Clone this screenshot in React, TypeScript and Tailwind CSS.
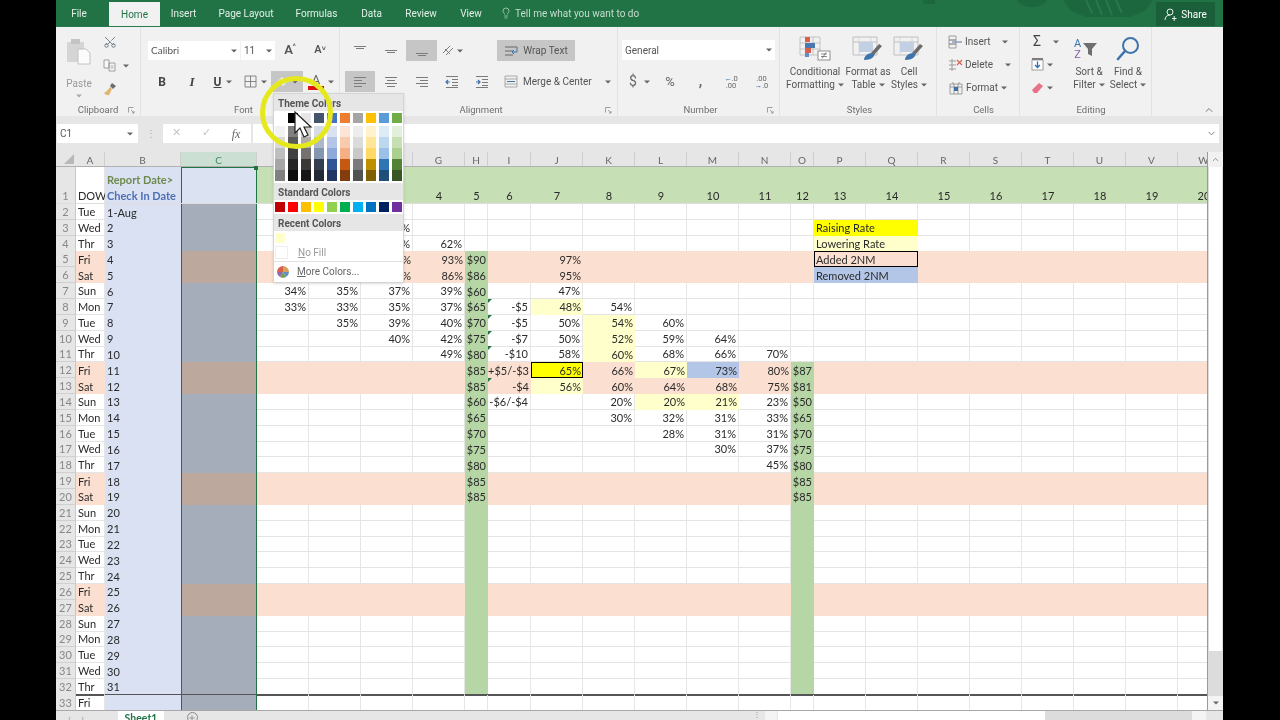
import { ChevronDown, ChevronUp, Lightbulb, Scissors, Plus } from "lucide-react";
import type { ReactNode } from "react";

const COLS = ["A", "B", "C", "D", "E", "F", "G", "H", "I", "J", "K", "L", "M", "N", "O", "P", "Q", "R", "S", "T", "U", "V", "W"];
const GRID =
  "grid grid-cols-[20px_29px_76px_76px_52px_52px_52px_52px_23px_43px_52px_52px_52px_52px_52px_23px_52px_52px_52px_52px_52px_52px_52px_52px]";

const DOW = ["Tue", "Wed", "Thr", "Fri", "Sat", "Sun", "Mon"];
const ORANGE = [5, 6, 12, 13, 19, 20, 26, 27];

const VALUES: Record<number, Record<string, string>> = {
  3: { F: "58%", P: "Raising Rate" },
  4: { F: "59%", G: "62%", P: "Lowering Rate" },
  5: { F: "90%", G: "93%", H: "$90", J: "97%", P: "Added 2NM" },
  6: { F: "83%", G: "86%", H: "$86", J: "95%", P: "Removed 2NM" },
  7: { D: "34%", E: "35%", F: "37%", G: "39%", H: "$60", J: "47%" },
  8: { D: "33%", E: "33%", F: "35%", G: "37%", H: "$65", I: "-$5", J: "48%", K: "54%" },
  9: { E: "35%", F: "39%", G: "40%", H: "$70", I: "-$5", J: "50%", K: "54%", L: "60%" },
  10: { F: "40%", G: "42%", H: "$75", I: "-$7", J: "50%", K: "52%", L: "59%", M: "64%" },
  11: { G: "49%", H: "$80", I: "-$10", J: "58%", K: "60%", L: "68%", M: "66%", N: "70%" },
  12: { H: "$85", I: "+$5/-$3", J: "65%", K: "66%", L: "67%", M: "73%", N: "80%", O: "$87" },
  13: { H: "$85", I: "-$4", J: "56%", K: "60%", L: "64%", M: "68%", N: "75%", O: "$81" },
  14: { H: "$60", I: "-$6/-$4", K: "20%", L: "20%", M: "21%", N: "23%", O: "$50" },
  15: { H: "$65", K: "30%", L: "32%", M: "31%", N: "33%", O: "$65" },
  16: { H: "$70", L: "28%", M: "31%", N: "31%", O: "$70" },
  17: { H: "$75", M: "30%", N: "37%", O: "$75" },
  18: { H: "$80", N: "45%", O: "$80" },
  19: { H: "$85", O: "$85" },
  20: { H: "$85", O: "$85" },
};

const FILLS: Record<string, string> = {
  J8: "bg-[#ffffcc]",
  K9: "bg-[#ffffcc]",
  K10: "bg-[#ffffcc]",
  K11: "bg-[#ffffcc]",
  J12: "bg-[#ffff00]",
  L12: "bg-[#ffffcc]",
  M12: "bg-[#b4c6e7]",
  J13: "bg-[#ffffcc]",
  L14: "bg-[#ffffcc]",
  M14: "bg-[#ffffcc]",
  P3: "bg-[#ffff00]",
  P4: "bg-[#ffffcc]",
  P6: "bg-[#b4c6e7]",
};

const COMMENTS = ["I8", "I9", "I10", "I11", "I13"];

const THEME = [
  ["bg-[#ffffff]", "bg-[#f2f2f2]", "bg-[#d9d9d9]", "bg-[#bfbfbf]", "bg-[#a6a6a6]", "bg-[#808080]"],
  ["bg-[#000000]", "bg-[#808080]", "bg-[#595959]", "bg-[#404040]", "bg-[#262626]", "bg-[#0d0d0d]"],
  ["bg-[#e7e6e6]", "bg-[#d0cece]", "bg-[#afabab]", "bg-[#767171]", "bg-[#3b3838]", "bg-[#171616]"],
  ["bg-[#44546a]", "bg-[#d6dce4]", "bg-[#adb9ca]", "bg-[#8497b0]", "bg-[#333f4f]", "bg-[#222b35]"],
  ["bg-[#4472c4]", "bg-[#d9e1f2]", "bg-[#b4c6e7]", "bg-[#8ea9db]", "bg-[#305496]", "bg-[#203764]"],
  ["bg-[#ed7d31]", "bg-[#fce4d6]", "bg-[#f8cbad]", "bg-[#f4b084]", "bg-[#c65911]", "bg-[#833c0b]"],
  ["bg-[#a5a5a5]", "bg-[#ededed]", "bg-[#dbdbdb]", "bg-[#c9c9c9]", "bg-[#7b7b7b]", "bg-[#525252]"],
  ["bg-[#ffc000]", "bg-[#fff2cc]", "bg-[#ffe699]", "bg-[#ffd966]", "bg-[#bf8f00]", "bg-[#806000]"],
  ["bg-[#5b9bd5]", "bg-[#ddebf7]", "bg-[#bdd7ee]", "bg-[#9bc2e6]", "bg-[#2f75b5]", "bg-[#1f4e78]"],
  ["bg-[#70ad47]", "bg-[#e2efda]", "bg-[#c6e0b4]", "bg-[#a9d08e]", "bg-[#548235]", "bg-[#375623]"],
];

const STANDARD = [
  "bg-[#c00000]",
  "bg-[#ff0000]",
  "bg-[#ffc000]",
  "bg-[#ffff00]",
  "bg-[#92d050]",
  "bg-[#00b050]",
  "bg-[#00b0f0]",
  "bg-[#0070c0]",
  "bg-[#002060]",
  "bg-[#7030a0]",
];

function Caret({ className = "" }: { className?: string }) {
  return (
    <svg width="6" height="4" viewBox="0 0 6 4" className={className}>
      <path d="M0 0.5h6L3 3.5z" fill="#666" />
    </svg>
  );
}

/* horizontal text-lines icon used by the alignment and indent buttons */
function Lines({ rows }: { rows: [number, number, number][] }) {
  return (
    <svg width="16" height="14" viewBox="0 0 16 14">
      {rows.map(([x, y, w], i) => (
        <rect key={i} x={x} y={y} width={w} height="1" fill="#7b7b7b" />
      ))}
    </svg>
  );
}

function GridIcon({ children }: { children?: ReactNode }) {
  return (
    <svg width="16" height="14" viewBox="0 0 16 14" fill="none">
      {children}
    </svg>
  );
}

function Btn({ className = "", children }: { className?: string; children: ReactNode }) {
  return <div className={`flex items-center justify-center h-[21px] shrink-0 whitespace-nowrap ${className}`}>{children}</div>;
}

function Launcher() {
  return (
    <svg width="7" height="7" viewBox="0 0 7 7" fill="none" className="absolute right-[5px] bottom-[2px]">
      <path d="M0.5 0.5h5M0.5 0.5v5M3 3l3 3M4 6h2V4" stroke="#8a8a8a" strokeWidth="0.8" />
    </svg>
  );
}

function Group({
  label,
  launcher,
  className,
  children,
}: {
  label: string;
  launcher?: boolean;
  className: string;
  children: ReactNode;
}) {
  return (
    <div className={`relative h-full shrink-0 flex flex-col border-r border-r-[#e2e2e2] ${className}`}>
      <div className="h-[76px] flex flex-col">{children}</div>
      <div className="text-center text-[9.5px] leading-[13px] text-[#6f6f6f]">{label}</div>
      {launcher && <Launcher />}
    </div>
  );
}

function BigBtn({ className, icon, top, bottom }: { className: string; icon: ReactNode; top: string; bottom: string }) {
  return (
    <div className={`flex flex-col items-center shrink-0 text-[10px] leading-[13px] text-[#555] whitespace-nowrap ${className}`}>
      <div className="h-[25px] mt-[9px] mb-[4px] flex items-end">{icon}</div>
      <span>{top}</span>
      <span className="flex items-center gap-[3px]">
        {bottom}
        <Caret />
      </span>
    </div>
  );
}

function TableIcon({ cond }: { cond?: boolean }) {
  if (cond) {
    return (
      <svg width="38" height="25" viewBox="0 0 38 25" fill="none">
        <path d="M4 1h20v18H4zM4 7h20M4 13h20M11 1v18M17 1v18" stroke="#b9b9b9" strokeWidth="0.8" />
        <rect x="9" y="1" width="5" height="5" fill="#d9614c" />
        <rect x="9" y="7" width="10" height="5" fill="#4a78b0" />
        <rect x="9" y="12" width="6" height="5" fill="#d9614c" />
        <rect x="9" y="17" width="4" height="4" fill="#5f8fc4" />
        <rect x="22" y="15" width="12" height="9" fill="#fff" stroke="#777" strokeWidth="0.8" />
        <path d="M25 18h6M25 20.5h6M30 16.5l-4 6" stroke="#555" strokeWidth="0.7" />
      </svg>
    );
  }
  return (
    <svg width="32" height="25" viewBox="0 0 32 25" fill="none">
      <path d="M1 1h24v18H1zM1 6h24" stroke="#b5b5b5" strokeWidth="0.8" />
      <path d="M7 1v18M19 1v18" stroke="#cfcfcf" strokeWidth="0.7" />
      <rect x="7" y="6" width="14" height="10" fill="#c3cfe2" />
      <path d="M19 17l8-9 3 2-8 9z" fill="#6b6b6b" />
      <path d="M12 24c0-4 4-7 8-7 2 0 3 1 2 3-2 3-6 4-10 4z" fill="#3f73ac" />
    </svg>
  );
}

function Ribbon() {
  return (
    <div className="h-[89px] bg-[#f1f1f1] flex relative shrink-0 text-[#555]">
      <Group label="Clipboard" launcher className="w-[85px]">
        <div className="flex h-full">
          <div className="w-[46px] flex flex-col items-center text-[10px] text-[#9a9a9a] leading-[13px]">
            <svg width="26" height="27" viewBox="0 0 26 27" fill="none" className="mt-[11px] mb-[12px]">
              <rect x="1" y="4" width="17" height="20" fill="#d5d5d5" />
              <rect x="5" y="1" width="9" height="5" fill="#c4c4c4" />
              <path d="M12 11h8l4 4v11H12z" fill="#fbfbfb" stroke="#c2c2c2" />
            </svg>
            <span>Paste</span>
            <Caret className="mt-[4px] opacity-50" />
          </div>
          <div className="flex flex-col pt-[4px]">
            <Btn className="w-[20px] ml-[-2px]">
              <Scissors size={14} strokeWidth={1.4} className="-rotate-90 text-[#5c6b7a]" />
            </Btn>
            <Btn className="ml-[-2px] w-[32px] mt-[3px] gap-[7px] justify-start pl-[3px]">
              <svg width="13" height="13" viewBox="0 0 13 13" fill="none">
                <path d="M1 1h5v8H1zM6 4h6v8H6z" fill="#f7f7f7" stroke="#8a8a8a" strokeWidth="0.8" />
                <path d="M7.5 7h3M7.5 9h3" stroke="#8a8a8a" strokeWidth="0.7" />
              </svg>
              <Caret />
            </Btn>
            <Btn className="w-[20px] ml-[-2px] mt-[2px]">
              <svg width="14" height="14" viewBox="0 0 14 14" fill="none">
                <path d="M9 1l4 3-3 3-3-3z" fill="#6c6c6c" />
                <path d="M7 5l2 2-3 6c-2 1-4-1-5-2 2-1 4-3 6-6z" fill="#dfb672" />
              </svg>
            </Btn>
          </div>
        </div>
      </Group>

      <Group label="Font" launcher className="w-[199px] pl-[7px]">
        <div className="flex items-center mt-[14px] h-[19px]">
          <div className="w-[92px] h-[19px] bg-white flex items-center justify-between px-[3px] text-[10px] font-[Lato,sans-serif]">
            Calibri
            <Caret />
          </div>
          <div className="w-[34px] ml-[1px] h-[19px] bg-white flex items-center justify-between px-[3px] text-[10px]">
            11
            <Caret />
          </div>
          <Btn className="w-[30px] text-[13px] font-semibold items-start">
            A<span className="text-[7px] self-start mt-[2px]">^</span>
          </Btn>
          <Btn className="w-[30px] text-[11px] font-semibold">
            A<span className="text-[7px] self-start mt-[4px]">˅</span>
          </Btn>
        </div>
        <div className="flex items-center mt-[11px] ml-[-1px]">
          <Btn className="w-[30px] text-[12px] font-bold text-[#444]">B</Btn>
          <Btn className="w-[30px] text-[13px] italic font-['Liberation_Serif',serif] font-bold text-[#444]">I</Btn>
          <Btn className="w-[30px] gap-[5px] text-[12px] font-bold text-[#444] pl-[2px]">
            <span className="underline">U</span>
            <Caret />
          </Btn>
          <Btn className="w-[34px] gap-[4px] pl-[2px]">
            <svg width="13" height="13" viewBox="0 0 13 13" fill="none">
              <path d="M1 1h11v11H1zM6.5 1v11M1 6.5h11" stroke="#7b7b7b" strokeWidth="0.9" />
            </svg>
            <Caret />
          </Btn>
          <Btn className="w-[32px] bg-[#c6c6c6] gap-[3px]">
            <svg width="13" height="12" viewBox="0 0 13 12">
              <path d="M6 1l5 5-4 4-5-5z" fill="#eee" />
            </svg>
            <Caret />
          </Btn>
          <Btn className="w-[36px] gap-[4px] justify-center">
            <span className="flex flex-col items-center leading-[13px] text-[13px] text-[#666]">
              A<span className="w-[16px] h-[4px] bg-[#e01010]" />
            </span>
            <Caret />
          </Btn>
        </div>
      </Group>

      <Group label="Alignment" launcher className="w-[278px] pl-[5px]">
        <div className="flex items-center mt-[13px]">
          <Btn className="w-[30px]">
            <Lines rows={[[2, 2, 12], [4, 4, 8]]} />
          </Btn>
          <Btn className="w-[31px]">
            <Lines rows={[[2, 6, 12], [4, 8, 8]]} />
          </Btn>
          <Btn className="w-[31px] bg-[#c6c6c6]">
            <Lines rows={[[2, 9, 12], [4, 11, 8]]} />
          </Btn>
          <Btn className="w-[30px] gap-[2px]">
            <svg width="14" height="13" viewBox="0 0 14 13" fill="none">
              <path d="M2 9l7-7M5 11l7-7M4 5l5 5" stroke="#7b7b7b" strokeWidth="1" />
            </svg>
            <Caret />
          </Btn>
          <div className="w-[30px]" />
          <Btn className="w-[78px] bg-[#c6c6c6] gap-[4px] text-[10px] text-[#555]">
            <svg width="15" height="14" viewBox="0 0 15 14" fill="none">
              <path d="M1 3h12M1 7h8M1 11h8" stroke="#666" />
              <path d="M13 3v5h-4M10 6l-2 2 2 2" stroke="#3f73ac" />
            </svg>
            Wrap Text
          </Btn>
        </div>
        <div className="flex items-center mt-[10px]">
          <Btn className="w-[30px] bg-[#c6c6c6]">
            <Lines rows={[[2, 2, 12], [2, 5, 8], [2, 8, 12], [2, 11, 8]]} />
          </Btn>
          <Btn className="w-[31px]">
            <Lines rows={[[2, 2, 12], [4, 5, 8], [2, 8, 12], [4, 11, 8]]} />
          </Btn>
          <Btn className="w-[31px]">
            <Lines rows={[[2, 2, 12], [6, 5, 8], [2, 8, 12], [6, 11, 8]]} />
          </Btn>
          <Btn className="w-[30px]">
            <GridIcon>
              <path d="M2 1.5h12M8 4.5h6M8 7.5h6M8 10.5h6M2 12.5h12" stroke="#7b7b7b" />
              <path d="M2 7h4M4 5L2 7l2 2" stroke="#3f73ac" strokeWidth="1.2" />
            </GridIcon>
          </Btn>
          <Btn className="w-[30px]">
            <GridIcon>
              <path d="M2 1.5h12M8 4.5h6M8 7.5h6M8 10.5h6M2 12.5h12" stroke="#7b7b7b" />
              <path d="M2 7h4M4 5l2 2-2 2" stroke="#3f73ac" strokeWidth="1.2" />
            </GridIcon>
          </Btn>
          <Btn className="w-[118px] gap-[5px] justify-start pl-[7px] text-[10px] text-[#555]">
            <svg width="14" height="13" viewBox="0 0 14 13" fill="none">
              <path d="M1 1h12v11H1zM1 4h12M1 9h12" stroke="#9a9a9a" strokeWidth="0.8" />
              <path d="M3 6.5h8" stroke="#3f73ac" />
            </svg>
            Merge &amp; Center
            <Caret className="ml-[8px]" />
          </Btn>
        </div>
      </Group>

      <Group label="Number" launcher className="w-[162px] pl-[4px]">
        <div className="w-[153px] h-[20px] mt-[13px] bg-white flex items-center justify-between px-[3px] text-[10px]">
          General
          <Caret />
        </div>
        <div className="flex items-center mt-[11px] text-[#666]">
          <Btn className="w-[33px] gap-[7px] text-[14px] pl-[2px]">
            $<Caret />
          </Btn>
          <Btn className="w-[30px] text-[13px]">%</Btn>
          <Btn className="w-[31px] text-[14px] font-bold">,</Btn>
          <Btn className="w-[30px]">
            <span className="text-[7.5px] leading-[7px] text-center">
              <span className="text-[#3f73ac]">←</span>.0
              <br />
              .00
            </span>
          </Btn>
          <Btn className="w-[31px]">
            <span className="text-[7.5px] leading-[7px] text-center">
              .00
              <br />
              <span className="text-[#3f73ac]">→</span>.0
            </span>
          </Btn>
        </div>
      </Group>

      <Group label="Styles" className="w-[157px] pl-[3px]">
        <div className="flex">
          <BigBtn className="w-[64px]" icon={<TableIcon cond />} top="Conditional" bottom="Formatting" />
          <BigBtn className="w-[42px]" icon={<TableIcon />} top="Format as" bottom="Table" />
          <BigBtn className="w-[40px]" icon={<TableIcon />} top="Cell" bottom="Styles" />
        </div>
      </Group>

      <Group label="Cells" className="w-[83px] pl-[11px]">
        <div className="flex flex-col pt-[3px] text-[10px] text-[#555]">
          <div className="flex items-center h-[23px]">
            <GridIcon>
              <path d="M1 1h7v4H1zM1 5h7v4H1zM1 9h7v4H1z" stroke="#8a8a8a" strokeWidth="0.8" />
              <path d="M4 7h10" stroke="#7f9ab8" strokeWidth="1.4" />
            </GridIcon>
            <span className="ml-[1px]">Insert</span>
            <Caret className="ml-[11px]" />
          </div>
          <div className="flex items-center h-[23px]">
            <GridIcon>
              <path d="M1 3h7M1 7h7M1 11h7M4 1v12" stroke="#8a8a8a" strokeWidth="0.8" />
              <path d="M9 2l5 5M14 2L9 7" stroke="#d9614c" strokeWidth="1.2" />
            </GridIcon>
            <span className="ml-[1px]">Delete</span>
            <Caret className="ml-[12px]" />
          </div>
          <div className="flex items-center h-[23px]">
            <GridIcon>
              <path d="M2 3h12v10H2zM2 6h12M6 3v10M10 3v10M5 1v2M11 1v2" stroke="#8a8a8a" strokeWidth="0.8" />
              <rect x="6" y="6" width="4" height="4" fill="#3f6fa8" />
            </GridIcon>
            <span className="ml-[2px]">Format</span>
            <Caret className="ml-[3px]" />
          </div>
        </div>
      </Group>

      <Group label="Editing" className="w-[132px] pl-[11px]">
        <div className="flex">
          <div className="flex flex-col w-[40px] pt-[3px]">
            <div className="flex items-center h-[23px] gap-[10px] text-[14px] text-[#444]">
              <span className="w-[12px] text-center">Σ</span>
              <Caret />
            </div>
            <div className="flex items-center h-[23px] gap-[3px]">
              <svg width="13" height="13" viewBox="0 0 13 13" fill="none">
                <rect x="1" y="0" width="11" height="2" fill="#7b7b7b" />
                <rect x="1" y="2" width="11" height="10" fill="#fff" stroke="#8a8a8a" strokeWidth="0.8" />
                <path d="M6.5 3.5v6M4 7l2.5 2.5L9 7" stroke="#2f6fb0" strokeWidth="1.3" />
              </svg>
              <Caret />
            </div>
            <div className="flex items-center h-[23px] gap-[3px]">
              <svg width="13" height="12" viewBox="0 0 13 12">
                <path d="M8 1l4 3-6 7H3L1 8z" fill="#e8718a" />
              </svg>
              <Caret />
            </div>
          </div>
          <BigBtn
            className="w-[38px] ml-[-1px]"
            icon={
              <span className="relative flex items-center w-[30px] h-[25px]">
                <span className="text-[11px] leading-[11px] text-center">
                  <span className="text-[#3f73ac]">A</span>
                  <br />
                  <span className="text-[#8a5aa8]">Z</span>
                </span>
                <svg width="16" height="16" viewBox="0 0 16 16" className="ml-[1px]">
                  <path d="M1 2h14l-5 6v7l-4-2V8z" fill="#6f6f6f" />
                </svg>
              </span>
            }
            top="Sort &amp;"
            bottom="Filter"
          />
          <BigBtn
            className="w-[40px]"
            icon={
              <svg width="24" height="25" viewBox="0 0 24 25" fill="none">
                <circle cx="14.5" cy="9.5" r="7.5" stroke="#3f73ac" strokeWidth="2" />
                <path d="M9 15l-7 8" stroke="#3f73ac" strokeWidth="2.6" strokeLinecap="round" />
              </svg>
            }
            top="Find &amp;"
            bottom="Select"
          />
        </div>
      </Group>
      <div className="flex-1 relative">
        <ChevronUp size={12} className="absolute right-[8px] bottom-[0px] text-[#777]" />
      </div>
    </div>
  );
}

function Tabs() {
  const items = [
    { t: "File", w: "w-[53px] pr-[7px]" },
    { t: "Home", w: "w-[51px]", active: true },
    { t: "Insert", w: "w-[47px]" },
    { t: "Page Layout", w: "w-[78px]" },
    { t: "Formulas", w: "w-[63px]" },
    { t: "Data", w: "w-[47px]" },
    { t: "Review", w: "w-[52px]" },
    { t: "View", w: "w-[48px]" },
  ];
  return (
    <div className="h-[27px] bg-[#217346] flex relative shrink-0 overflow-hidden border-b border-b-[#2a7a4f] text-[10px] text-[#e3efe8]">
      {/* faint pattern behind the tab strip */}
      <svg width="260" height="26" viewBox="0 0 260 26" className="absolute left-[860px] top-0">
        <path d="M147 0h90l-8 11-15 6h-44l-15-6z" fill="#1d673f" />
        <path d="M101 0h30c-3 5-8 7-15 7s-12-2-15-7zM7 0h12v4H7z" fill="#1d673f" />
        <path d="M170 0l6 13M180 0l6 15M190 0l6 15M200 0l6 13" stroke="#257a4c" strokeWidth="2" />
      </svg>
      {items.map((it) =>
        it.active ? (
          <div key={it.t} className={`${it.w} mt-[2px] bg-[#f1f1f1] text-[#217346] flex items-center justify-center`}>
            {it.t}
          </div>
        ) : (
          <div key={it.t} className={`${it.w} flex items-center justify-center relative`}>
            {it.t}
          </div>
        ),
      )}
      <div className="flex items-center ml-[5px] gap-[3px] relative text-[#c6ddcf]">
        <Lightbulb size={12} strokeWidth={1.4} />
        Tell me what you want to do
      </div>
      <div className="absolute left-[1100px] top-[2px] w-[59px] h-[24px] bg-[#1b5f3a] flex items-center justify-center gap-[4px] text-white">
        <svg width="13" height="13" viewBox="0 0 13 13" fill="none" stroke="#fff" strokeWidth="0.9">
          <circle cx="6" cy="4" r="3" />
          <path d="M1 12c0-3 2-5 5-5M8 10.5h4.5M10.2 8v5" />
        </svg>
        Share
      </div>
    </div>
  );
}

function FormulaBar() {
  return (
    <div className="flex flex-col shrink-0">
      <div className="h-[8px] bg-[#e6e6e6]" />
      <div className="h-[19px] bg-[#e6e6e6] flex items-center text-[#555]">
        <div className="w-[81px] ml-[1px] h-full bg-white flex items-center justify-between pl-[3px] pr-[5px] text-[10px]">
          C1
          <Caret />
        </div>
        <div className="w-[25px] text-center text-[#aaa] text-[10px] leading-[6px]">⋮</div>
        <div className="w-[88px] h-full bg-white flex items-center">
          <span className="w-[26px] text-center text-[#c4c4c4] text-[11px]">✕</span>
          <span className="w-[30px] ml-[2px] text-center text-[#c4c4c4] text-[11px]">✓</span>
          <span className="w-[30px] text-center italic font-['Liberation_Serif',serif] text-[12px] text-[#666]">fx</span>
        </div>
        <div className="ml-[2px] w-[966px] h-full bg-white flex items-center justify-end pr-[2px]">
          <ChevronDown size={11} className="text-[#777]" />
        </div>
      </div>
      <div className="h-[9px] bg-[#e6e6e6]" />
    </div>
  );
}

function HeaderRow() {
  return (
    <div className={`${GRID} h-[15px] bg-[#e6e6e6] border-b border-b-[#b0b0b0] text-[10px] leading-[12px] font-[Lato,sans-serif] text-[#666]`}>
      <div className="flex items-end justify-end pr-[2px] pb-[2px]">
        <svg width="10" height="10" viewBox="0 0 10 10">
          <path d="M10 0v10H0z" fill="#b8b8b8" />
        </svg>
      </div>
      {COLS.map((c) => (
        <div
          key={c}
          className={`flex items-center justify-center pt-[1px] border-r border-r-[#cfcfcf] ${
            c === "C" ? "bg-[#cbe0d2] text-[#3f8a62]" : ""
          }`}
        >
          {c}
        </div>
      ))}
    </div>
  );
}

function TitleRow() {
  return (
    <div className={`${GRID} h-[37px] border-b border-b-[#dedede] text-[11px] leading-[14px] font-[Lato,sans-serif] text-[#2a2a2a] whitespace-nowrap`}>
      <div className="bg-[#e6e6e6] text-[#888] flex items-end justify-center border-r border-r-[#c8c8c8]">1</div>
      {COLS.map((c, i) => {
        if (c === "A") {
          return (
            <div key={c} className="flex items-end pl-[2px] border-r border-r-[#e4e4e4]">
              DOW
            </div>
          );
        }
        if (c === "B") {
          return (
            <div key={c} className="bg-[#d9e1f2] flex flex-col justify-end gap-[2px] pl-[2px] font-bold">
              <span className="text-[#70894f]">Report Date&gt;</span>
              <span className="text-[#4f6fb5]">Check In Date</span>
            </div>
          );
        }
        if (c === "C") {
          return (
            <div key={c} className="relative bg-[#dbe3f3] border-x border-x-[#217346] border-t border-t-[#217346]">
              <span className="absolute right-[-2px] top-[-2px] w-[4px] h-[4px] bg-[#217346]" />
            </div>
          );
        }
        return (
          <div key={c} className="bg-[#c6dfb4] flex items-end justify-center">
            {i - 2}
          </div>
        );
      })}
    </div>
  );
}

function Cell({ row, col }: { row: number; col: string }) {
  const addr = col + row;
  const orange = ORANGE.includes(row);
  const last = row === 32;
  const text =
    col === "A"
      ? DOW[(row - 2) % 7]
      : col === "B"
        ? row === 2
          ? "1-Aug"
          : row <= 32
            ? String(row - 1)
            : ""
        : VALUES[row]?.[col];

  let fill = FILLS[addr] ?? "";
  if (!fill && col === "B") fill = "bg-[#d9e1f2]";
  if (!fill && col === "C") fill = orange ? "bg-[#bda89e]" : "bg-[#a5adbb]";
  if (!fill && col === "H" && row >= 5 && row <= 32) fill = "bg-[#b7d6a5]";
  if (!fill && col === "O" && row >= 12 && row <= 32) fill = "bg-[#b7d6a5]";
  if (!fill && orange) fill = "bg-[#fbe0d1]";

  const legend = col === "P" && row >= 3 && row <= 6;
  const left = col === "A" || col === "B" || legend;
  const plain = !fill || col === "C";
  const outlined = addr === "J12" || addr === "P5";

  return (
    <div
      className={`relative flex items-center pt-[1px] whitespace-nowrap overflow-visible ${
        left ? "justify-start pl-[2px]" : "justify-end pr-[2px]"
      } ${legend ? "col-span-2" : ""} ${fill} ${plain && col !== "C" ? "border-r border-r-[#e6e6e6]" : ""} ${
        col === "C" ? "border-x border-x-[#217346]" : ""
      } ${last ? "border-b-2 border-b-[#555555]" : plain && col !== "C" ? "border-b border-b-[#e4e4e4]" : ""}`}
    >
      {outlined && <span className="absolute inset-0 border-[1.5px] border-black" />}
      {COMMENTS.includes(addr) && (
        <span className="absolute left-0 top-0 w-0 h-0 border-t-[4px] border-r-[4px] border-t-[#217346] border-r-transparent" />
      )}
      <span className="relative">{text}</span>
    </div>
  );
}

function Sheet() {
  const rows = Array.from({ length: 32 }, (_, i) => i + 2);
  return (
    <div className="flex-1 flex min-h-0">
      <div className="w-[1151px] overflow-hidden bg-white">
        <HeaderRow />
        <TitleRow />
        {rows.map((r) => (
          <div key={r} className={`${GRID} h-[15.84px] text-[11px] leading-[14px] font-[Lato,sans-serif] text-[#2a2a2a]`}>
            <div className="bg-[#e6e6e6] text-[#888] flex items-center justify-center pt-[1px] border-r border-r-[#c8c8c8] border-b border-b-[#d0d0d0]">
              {r}
            </div>
            {COLS.filter((c) => !(c === "Q" && r >= 3 && r <= 6)).map((c) => (
              <Cell key={c} row={r} col={c} />
            ))}
          </div>
        ))}
      </div>
      <div className="flex-1 flex flex-col border-l border-l-[#9a9a9a] bg-[#dcdcdc]">
        <div className="h-[15px] bg-[#f1f1f1] flex items-center justify-center">
          <ChevronUp size={9} className="text-[#777]" />
        </div>
        <div className="h-[484px] bg-white mx-[1px]" />
        <div className="flex-1" />
        <div className="h-[14px] bg-[#f4f4f4] flex items-center justify-center">
          <Caret />
        </div>
      </div>
    </div>
  );
}

function SheetTabs() {
  return (
    <div className="h-[10px] shrink-0 bg-[#e6e6e6] border-t border-t-[#a8a8a8] flex overflow-hidden">
      <div className="w-[62px] flex gap-[10px] pl-[12px] pt-[3px] text-[#aaa] text-[10px] leading-[10px]">
        <span>‹</span>
        <span>›</span>
      </div>
      <div className="w-[46px] h-[18px] bg-white flex justify-center pt-[1px] text-[10.5px] leading-[12px] font-bold text-[#217346] font-[Lato,sans-serif]">
        Sheet1
      </div>
      <div className="w-[56px] flex justify-center pt-[1px]">
        <span className="w-[11px] h-[11px] rounded-full border border-[#8a8a8a] flex items-center justify-center">
          <Plus size={8} className="text-[#777]" />
        </span>
      </div>
      <div className="w-[533px]" />
      <div className="w-[12px] text-[#999] text-[8px] leading-[8px]">⋮</div>
      <div className="w-[12px] h-full bg-[#f4f4f4]" />
      <div className="w-[267px] ml-[1px] h-full bg-white" />
      <div className="w-[147px] h-full bg-[#dcdcdc]" />
      <div className="w-[14px] h-full bg-[#f4f4f4]" />
    </div>
  );
}

function FillMenu() {
  const head = "h-[17px] bg-[#e6e6e6] pl-[4px] pt-[1px] flex items-center text-[10px] font-bold text-[#555]";
  return (
    <div className="absolute left-[273px] top-[93px] w-[131px] h-[190px] bg-white border border-[#d4d4d4] shadow-sm text-[#666]">
      <div className={head}>Theme Colors</div>
      <div className="flex gap-[3px] pl-[1px] pt-[2px]">
        {THEME.map((shades, i) => (
          <div key={i} className="flex flex-col w-[10px]">
            <div className={`h-[10px] mb-[3px] ${shades[0]}`} />
            {shades.slice(1).map((s) => (
              <div key={s} className={`h-[11px] ${s}`} />
            ))}
          </div>
        ))}
      </div>
      <div className={`${head} mt-[2px]`}>Standard Colors</div>
      <div className="flex gap-[3px] pl-[1px] pt-[2px]">
        {STANDARD.map((s) => (
          <div key={s} className={`w-[10px] h-[10px] ${s}`} />
        ))}
      </div>
      <div className={`${head} mt-[2px]`}>Recent Colors</div>
      <div className="w-[10px] h-[10px] ml-[1px] mt-[2px] bg-[#ffffcc]" />
      <div className="flex items-center h-[14px] mt-[2px] pl-[1px] text-[10px] text-[#999]">
        <span className="w-[13px] h-[13px] border border-[#eee]" />
        <span className="ml-[10px]">
          <span className="underline">N</span>o Fill
        </span>
      </div>
      <div className="border-t border-t-[#e2e2e2] mt-[2px] flex items-center h-[20px] pl-[3px] text-[10px]">
        <svg width="12" height="12" viewBox="0 0 12 12" className="mr-[8px]">
          <path d="M6 6V0a6 6 0 0 1 6 6z" fill="#d9a05b" />
          <path d="M6 6h6a6 6 0 0 1-3 5z" fill="#5f8fc4" />
          <path d="M6 6l3 5a6 6 0 0 1-6 0z" fill="#7a9c5a" />
          <path d="M6 6l-3 5A6 6 0 0 1 0 6z" fill="#8a6aa8" />
          <path d="M6 6H0a6 6 0 0 1 6-6z" fill="#d9614c" />
        </svg>
        <span>
          <span className="underline">M</span>ore Colors...
        </span>
      </div>
    </div>
  );
}

function Pointer() {
  return (
    <>
      <div className="absolute left-[260px] top-[76px] w-[73px] h-[73px] rounded-full border-[5px] border-[#e6e81e] blur-[0.6px]" />
      <svg width="20" height="28" viewBox="0 0 20 28" className="absolute left-[294px] top-[111px]">
        <path d="M1 1v21l5-5 4 9 4-2-4-8h7z" fill="#fff" stroke="#222" strokeWidth="1.2" />
      </svg>
    </>
  );
}

export default function App() {
  return (
    <div className="relative w-[1280px] h-[720px] bg-black overflow-hidden font-[Roboto,sans-serif] blur-[0.3px]">
      <div className="ml-[56px] w-[1167px] h-full flex flex-col">
        <Tabs />
        <Ribbon />
        <FormulaBar />
        <Sheet />
        <SheetTabs />
      </div>
      <FillMenu />
      <Pointer />
    </div>
  );
}
